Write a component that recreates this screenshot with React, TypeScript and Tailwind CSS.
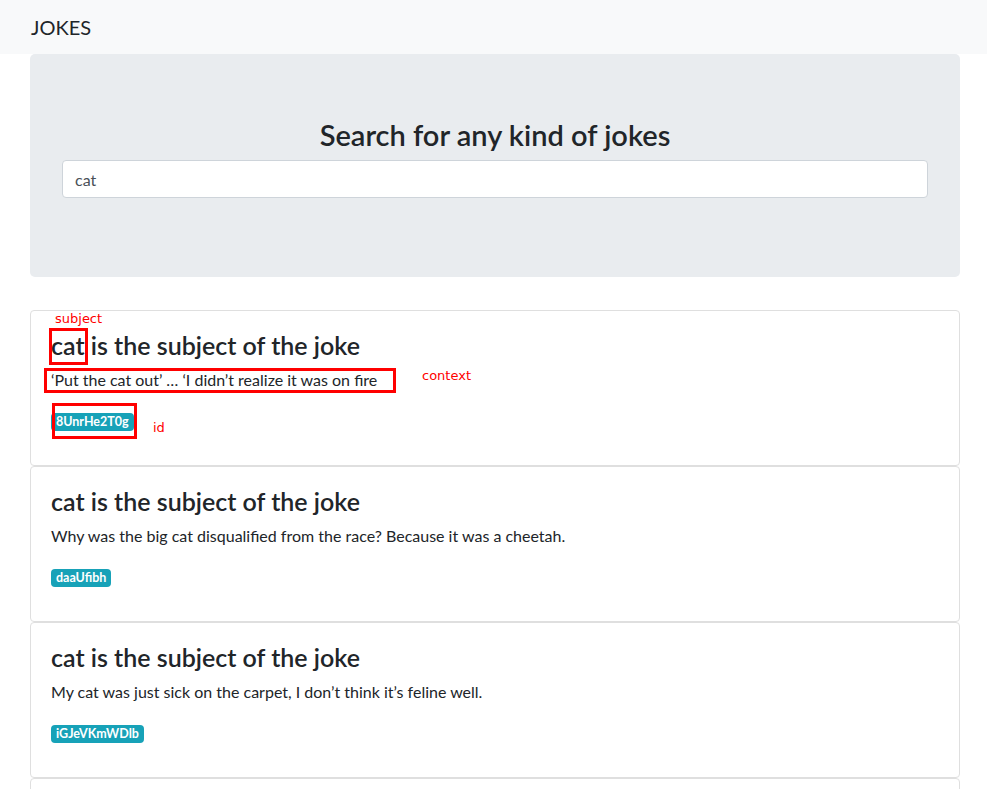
import React from "react";

interface Joke {
  id: string;
  subject: string;
  text: string;
}

const jokes: Joke[] = [
  { id: "8UnrHe2T0g", subject: "cat", text: "‘Put the cat out’ … ‘I didn’t realize it was on fire" },
  { id: "daaUfibh", subject: "cat", text: "Why was the big cat disqualified from the race? Because it was a cheetah." },
  { id: "iGJeVKmWDlb", subject: "cat", text: "My cat was just sick on the carpet, I don’t think it’s feline well." },
];

function JokeCard({ joke, annotated }: { joke: Joke; annotated?: boolean }) {
  return (
    <div className="relative h-[156px] border border-[#dfdfdf] rounded-[4px] bg-white px-5 pt-5">
      <h4 className="text-[25px] leading-[29px] font-semibold text-[#212529] mb-2">
        {joke.subject} is the subject of the joke
      </h4>
      <p className="text-[16px] leading-6 text-[#212529] mb-4">{joke.text}</p>
      <div className="leading-6">
        <span className="inline-block align-middle text-[12.5px] font-bold leading-none px-[5px] py-[3px] rounded-[4px] bg-[#17a2b8] text-white">
          {joke.id}
        </span>
      </div>

      {/* red annotation overlays */}
      {annotated && (
        <>
          <div className="absolute left-[18px] top-[17px] w-[39px] h-[37px] border-[3px] border-[#ff0000]" />
          <div className="absolute left-[13px] top-[57px] w-[352px] h-[25px] border-[3px] border-[#ff0000]" />
          <div className="absolute left-[21px] top-[92px] w-[85px] h-[36px] border-[3px] border-[#ff0000]" />
          <span className="absolute left-[24px] top-[0px] text-[13px] leading-4 text-[#ff0000] font-['DejaVu_Sans',sans-serif]">subject</span>
          <span className="absolute left-[391px] top-[57px] text-[13px] leading-4 text-[#ff0000] font-['DejaVu_Sans',sans-serif]">context</span>
          <span className="absolute left-[122px] top-[109px] text-[13px] leading-4 text-[#ff0000] font-['DejaVu_Sans',sans-serif]">id</span>
        </>
      )}
    </div>
  );
}

export default function App() {
  return (
    <div className="h-[789px] overflow-hidden bg-white font-['Lato',sans-serif] text-[#212529]">
      {/* Navbar */}
      <nav className="h-[54px] bg-[#f8f9fa] flex items-center px-[31px]">
        <span className="text-[20px] text-[#212529]">JOKES</span>
      </nav>

      <main className="w-[930px] ml-[30px]">
        {/* Jumbotron */}
        <div className="bg-[#e9ecef] rounded-[5px] pt-[63px] pb-[79px] px-[32px]">
          <h2 className="text-[29px] leading-[35px] font-semibold text-center mb-2">Search for any kind of jokes</h2>
          <input
            defaultValue="cat"
            className="w-full h-[38px] bg-white border border-[#ced4da] rounded-[4px] px-3 text-[16px] text-[#495057] outline-none"
          />
        </div>

        {/* Results */}
        <div className="mt-[33px] flex flex-col">
          {jokes.map((j, i) => (
            <JokeCard key={j.id} joke={j} annotated={i === 0} />
          ))}
          <div className="h-[156px] border border-[#dfdfdf] rounded-[4px] bg-white" />
        </div>
      </main>
    </div>
  );
}
